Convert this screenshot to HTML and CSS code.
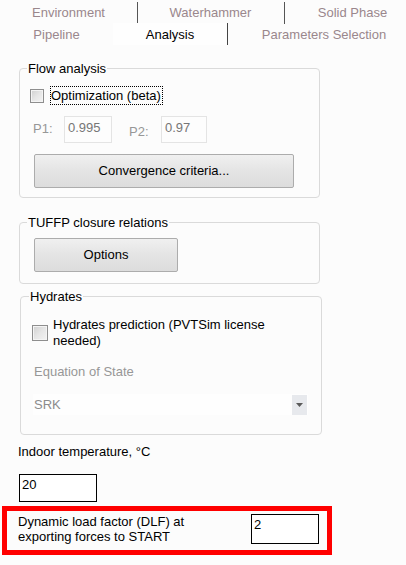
FILE: index.html
```html
<!DOCTYPE html>
<html>
<head>
<meta charset="utf-8">
<link rel="stylesheet" href="styles.css">
</head>
<body>
<div class="page">
  <div class="tabs">
    <div class="tab-row row1">
      <div class="tab t1">Environment</div>
      <div class="tab t2 sep">Waterhammer</div>
      <div class="tab t3 sep">Solid Phase</div>
    </div>
    <div class="tab-row row2">
      <div class="tab u1">Pipeline</div>
      <div class="tab u2 active">Analysis</div>
      <div class="tab u3 sep">Parameters Selection</div>
    </div>
  </div>

  <fieldset class="group flow">
    <legend>Flow analysis</legend>
    <div class="check-row">
      <span class="checkbox"></span>
      <span class="check-label focus">Optimization (beta)</span>
    </div>
    <div class="p-row">
      <span class="p-label p1">P1:</span>
      <span class="p-input w1">0.995</span>
      <span class="p-label p2">P2:</span>
      <span class="p-input w2">0.97</span>
    </div>
    <div class="button wide">Convergence criteria...</div>
  </fieldset>

  <fieldset class="group tuffp">
    <legend>TUFFP closure relations</legend>
    <div class="button options">Options</div>
  </fieldset>

  <fieldset class="group hydrates">
    <legend>Hydrates</legend>
    <div class="check-row hyd">
      <span class="checkbox big"></span>
      <span class="check-label multi">Hydrates prediction (PVTSim license needed)</span>
    </div>
    <div class="eos">Equation of State</div>
    <div class="combo">
      <span class="combo-text">SRK</span>
      <span class="combo-btn"><svg width="7" height="4" viewBox="0 0 7 4"><path d="M0 0 H7 L3.5 4 Z" fill="#5a5a5a"/></svg></span>
    </div>
  </fieldset>

  <div class="indoor-label">Indoor temperature, °C</div>
  <div class="text-input indoor">20</div>

  <div class="dlf-box">
    <div class="dlf-text">Dynamic load factor (DLF) at exporting forces to START</div>
    <div class="text-input dlf">2</div>
  </div>
</div>
</body>
</html>
```

FILE: styles.css
```css
html, body {
  margin: 0;
  padding: 0;
}
body {
  background: #fcfcfc;
  font-family: "Liberation Sans", Arial, sans-serif;
  font-size: 13px;
  color: #000;
  width: 406px;
  height: 565px;
  overflow: hidden;
}
.page {
  position: relative;
}
.tabs {
  padding-top: 2px;
  height: 43px;
  overflow: hidden;
  width: 406px;
}
.tab-row {
  display: grid;
  width: 420px;
}
.row1 {
  grid-template-columns: 137px 147px 136px;
  height: 21px;
}
.row2 {
  grid-template-columns: 113px 114px 193px;
  height: 22px;
}
.tab {
  text-align: center;
  color: #9a878c;
  white-space: nowrap;
}
.row1 .tab {
  line-height: 22px;
}
.row2 .tab {
  line-height: 23px;
}
.sep {
  border-left: 1px solid #555;
}
.t2 { padding-right: 1px; }
.active {
  color: #000;
  background: #fefefe;
}
.u3.sep {
  border-left: 1px solid #444;
}

.group {
  margin: 0;
  border: 1px solid #dadada;
  border-radius: 4px;
  min-width: 0;
}
.group legend {
  padding: 0 1px;
  margin-left: -3px;
  line-height: 15px;
  color: #000;
}
.flow {
  margin: 16px 0 0 19px;
  width: 301px;
  box-sizing: border-box;
  padding: 10px 10px 9px 10px;
}
.check-row {
  display: flex;
  align-items: center;
  height: 19px;
}
.checkbox {
  width: 14px;
  height: 14px;
  box-sizing: border-box;
  border: 1px solid #8e8e8e;
  background: linear-gradient(135deg, #cfcfcf 0%, #e6e6e6 50%, #f3f3f3 100%);
  box-shadow: inset 0 0 0 1px #f4f4f4;
  flex: none;
}
.check-label {
  margin-left: 6px;
  line-height: 17px;
}
.focus {
  border: 1px dotted #000;
  padding: 0 1px 0 0;
}
.p-row {
  display: flex;
  align-items: flex-start;
  margin-top: 11px;
  height: 27px;
}
.p-label {
  color: #979797;
  line-height: 15px;
}
.p1 {
  margin-left: 3px;
  margin-top: 5px;
  width: 31px;
}
.p2 {
  margin-left: 17px;
  margin-top: 8px;
  width: 32px;
}
.p-input {
  box-sizing: border-box;
  height: 27px;
  border: 1px solid #e4e4e4;
  background: #fdfdfd;
  color: #767676;
  padding: 3px 0 0 3px;
  line-height: 15px;
}
.w1 { width: 48px; }
.w2 { width: 46px; }
.button {
  box-sizing: border-box;
  border: 1px solid #acacac;
  border-radius: 2px;
  background: linear-gradient(#f0f0f0, #e4e4e4 50%, #dcdcdc);
  text-align: center;
  color: #000;
}
.wide {
  margin: 11px 0 0 4px;
  width: 260px;
  height: 34px;
  line-height: 32px;
}
.tuffp {
  margin: 17px 0 0 19px;
  width: 301px;
  box-sizing: border-box;
  padding: 8px 10px 11px 10px;
}
.options {
  margin-left: 4px;
  width: 144px;
  height: 34px;
  line-height: 32px;
}
.hydrates {
  margin: 5px 0 0 20px;
  width: 302px;
  box-sizing: border-box;
  padding: 13px 12px 19px 12px;
}
.hydrates legend {
  margin-left: -4px;
}
.check-row.hyd {
  height: auto;
  margin-left: -1px;
}
.checkbox.big {
  width: 16px;
  height: 16px;
}
.multi {
  line-height: 16px;
  width: 240px;
  margin-left: 5px;
}
.eos {
  color: #979797;
  margin: 14px 0 0 1px;
  line-height: 17px;
}
.combo {
  margin-top: 14px;
  height: 21px;
  width: 275px;
  display: flex;
  justify-content: space-between;
  align-items: stretch;
  background: #fefefe;
}
.combo-text {
  color: #8c8c8c;
  line-height: 21px;
  padding-left: 1px;
}
.combo-btn {
  width: 15px;
  margin: 1px 1px 0 0;
  background: #e7e9ed;
  display: flex;
  align-items: center;
  justify-content: center;
}
.indoor-label {
  margin: 8px 0 0 18px;
  line-height: 17px;
}
.text-input {
  box-sizing: border-box;
  border: 1px solid #000;
  background: #fff;
  line-height: 15px;
  padding: 2px 0 0 2px;
}
.indoor {
  margin: 14px 0 0 19px;
  width: 78px;
  height: 28px;
}
.dlf-box {
  margin: 4px 0 0 2px;
  width: 330px;
  height: 49px;
  box-sizing: border-box;
  border: 5px solid #ff0000;
  padding: 3px 8px 0 11px;
  display: flex;
  justify-content: space-between;
  align-items: flex-start;
}
.dlf-text {
  width: 200px;
  line-height: 15px;
}
.dlf {
  width: 68px;
  height: 30px;
}
```
